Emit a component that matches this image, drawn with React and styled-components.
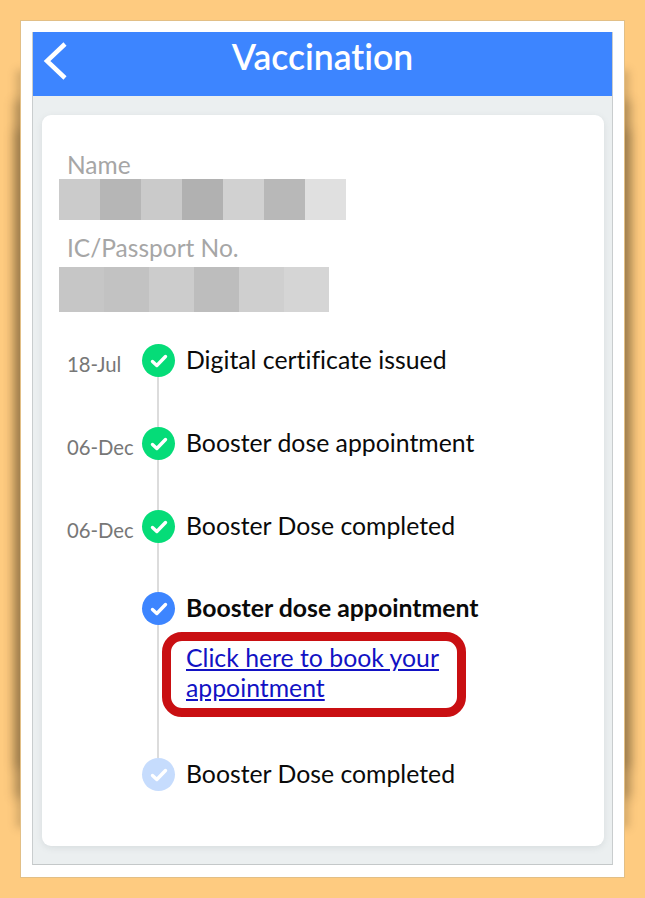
import React from "react";
import styled, { createGlobalStyle } from "styled-components";

const GlobalStyle = createGlobalStyle`
  html, body {
    margin: 0;
    padding: 0;
    background: #fecb80;
  }
  * {
    box-sizing: border-box;
  }
`;

const Page = styled.div`
  width: 645px;
  height: 898px;
  padding: 20px;
  background: #fecb80;
  font-family: Lato, "Open Sans", sans-serif;
  font-variant-ligatures: none;
`;

const Frame = styled.div`
  height: 858px;
  padding: 11px 11px 12px;
  background: #ffffff;
  border: 1px solid #e2bf86;
  box-shadow: -54px 0 8px -50px rgba(90, 70, 40, 0.25),
    54px 0 8px -50px rgba(90, 70, 40, 0.25),
    -86px 0 10px -80px rgba(90, 70, 40, 0.3),
    86px 0 10px -80px rgba(90, 70, 40, 0.3),
    -116px 0 10px -110px rgba(90, 70, 40, 0.25),
    116px 0 10px -110px rgba(90, 70, 40, 0.25);
`;

const Screen = styled.div`
  height: 100%;
  display: flex;
  flex-direction: column;
  background: #ebeff0;
  border-right: 1px solid #c9cdce;
  border-bottom: 1px solid #c4c8c9;
  border-left: 1px solid #c9cdce;
`;

const Header = styled.header`
  position: relative;
  flex: none;
  height: 64px;
  display: flex;
  align-items: center;
  justify-content: center;
  background: #3d85ff;
`;

const BackButton = styled.button`
  position: absolute;
  left: 9px;
  top: 8px;
  padding: 0;
  border: 0;
  background: none;
  line-height: 0;
`;

const Title = styled.h1`
  margin: 0 0 15px;
  font-size: 35.5px;
  font-weight: 600;
  line-height: 40px;
  color: #ffffff;
`;

const Card = styled.main`
  flex: none;
  height: 731px;
  margin: 19px 8px 0 9px;
  padding: 36px 17px 0;
  background: #ffffff;
  border-radius: 9px;
  box-shadow: 0 2px 6px rgba(120, 130, 135, 0.16);
`;

const FieldLabel = styled.div`
  margin-left: 8px;
  font-size: 24.5px;
  line-height: 28px;
  color: #a6a6a6;
`;

const Redacted = styled.div`
  display: flex;
  margin-top: ${(p) => p.$top}px;
  margin-bottom: ${(p) => p.$bottom}px;
  height: ${(p) => p.$height}px;
`;

const Pixel = styled.div`
  width: ${(p) => p.$width}px;
  background: ${(p) => p.$color};
`;

const Timeline = styled.ol`
  margin: 32px 0 0;
  padding: 0;
  list-style: none;
`;

const Step = styled.li`
  display: grid;
  grid-template-columns: 83px 33px 1fr;
  height: ${(p) => p.$height}px;
`;

const DateText = styled.div`
  padding: 8px 0 0 8px;
  font-size: 20.3px;
  line-height: 24px;
  white-space: nowrap;
  color: #777777;
`;

const Marker = styled.div`
  position: relative;
  &::after {
    content: "";
    display: ${(p) => (p.$last ? "none" : "block")};
    position: absolute;
    left: 15px;
    top: 33px;
    bottom: 0;
    width: 2px;
    background: #dcdcdc;
  }
`;

const Dot = styled.div`
  width: 33px;
  height: 33px;
  display: flex;
  align-items: center;
  justify-content: center;
  border-radius: 50%;
  background: ${(p) => p.$color};
`;

const StepBody = styled.div`
  min-width: 0;
`;

const StepTitle = styled.div`
  padding-left: 11px;
  font-size: 24.8px;
  font-weight: ${(p) => (p.$bold ? 700 : 400)};
  line-height: 32px;
  white-space: nowrap;
  color: #0a0a0a;
`;

const Callout = styled.div`
  width: 304px;
  height: 85px;
  margin: 8px 0 0 -13px;
  padding: 2px 0 0 15px;
  border: 9px solid #c90f12;
  border-radius: 20px;
`;

const BookLink = styled.a`
  font-size: 24.8px;
  line-height: 30px;
  color: #1212c4;
  text-decoration: underline;
`;

const nameCells = ["#cbcbcb", "#b6b6b6", "#cacaca", "#b1b1b1", "#d1d1d1", "#b8b8b8", "#e0e0e0"];
const idCells = ["#c6c6c6", "#c2c2c2", "#cccccc", "#bdbdbd", "#cfcfcf", "#d5d5d5"];

const steps = [
  { date: "18-Jul", title: "Digital certificate issued", color: "#05dc78", height: 83 },
  { date: "06-Dec", title: "Booster dose appointment", color: "#05dc78", height: 83 },
  { date: "06-Dec", title: "Booster Dose completed", color: "#05dc78", height: 82 },
  { title: "Booster dose appointment", color: "#3d85ff", height: 166, bold: true, link: true },
  { title: "Booster Dose completed", color: "#c6dcfd", height: 40, last: true },
];

const Check = () => (
  <svg width="18" height="14" viewBox="0 0 18 14" fill="none">
    <path d="M2.5 7.5l4.3 4L15.5 2.5" stroke="#fff" strokeWidth="3.4" strokeLinecap="round" strokeLinejoin="round" />
  </svg>
);

const App = () => {
  return (
    <Page>
      <GlobalStyle />
      <Frame>
        <Screen>
          <Header>
            <BackButton aria-label="Back">
              <svg width="26" height="42" viewBox="0 0 26 42" fill="none">
                <path d="M23 4L5 21l18 17" stroke="#fff" strokeWidth="4.5" />
              </svg>
            </BackButton>
            <Title>Vaccination</Title>
          </Header>
          <Card>
            <FieldLabel>Name</FieldLabel>
            <Redacted $top={0} $bottom={14} $height={41}>
              {nameCells.map((color, i) => (
                <Pixel key={i} $width={41} $color={color} />
              ))}
            </Redacted>
            <FieldLabel>IC/Passport No.</FieldLabel>
            <Redacted $top={5} $bottom={0} $height={45}>
              {idCells.map((color, i) => (
                <Pixel key={i} $width={45} $color={color} />
              ))}
            </Redacted>
            <Timeline>
              {steps.map((step, i) => (
                <Step key={i} $height={step.height}>
                  <DateText>{step.date}</DateText>
                  <Marker $last={step.last}>
                    <Dot $color={step.color}>
                      <Check />
                    </Dot>
                  </Marker>
                  <StepBody>
                    <StepTitle $bold={step.bold}>{step.title}</StepTitle>
                    {step.link && (
                      <Callout>
                        <BookLink href="#">Click here to book your appointment</BookLink>
                      </Callout>
                    )}
                  </StepBody>
                </Step>
              ))}
            </Timeline>
          </Card>
        </Screen>
      </Frame>
    </Page>
  );
};

export default App;
